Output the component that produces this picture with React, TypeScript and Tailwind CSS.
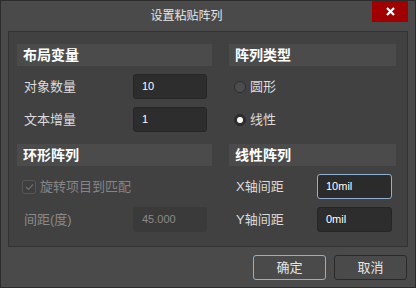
import React, { useState } from "react";

const font = { fontFamily: '"Liberation Sans", "Noto Sans CJK SC", sans-serif' };

const Header: React.FC<{ title: string }> = ({ title }) => (
  <div className="h-[22px] bg-[#4b4b4b] flex items-center pl-[6px] text-[14px] font-bold text-white">{title}</div>
);

const Field: React.FC<{ value: string; focused?: boolean; disabled?: boolean }> = ({ value, focused, disabled }) => (
  <div
    className={
      disabled
        ? "w-[74px] h-[25px] rounded-[3px] bg-[#3a3a3a] border border-[#3a3a3a] flex items-center pl-[8px] text-[11px] text-[#8a8a8a]"
        : focused
        ? "w-[75px] h-[25px] rounded-[3px] bg-[#2b2b2b] border border-[#8fb0d0] flex items-center pl-[8px] text-[11px] text-white"
        : "w-[74px] h-[25px] rounded-[3px] bg-[#2d2d2d] border border-[#262626] flex items-center pl-[8px] text-[11px] text-white"
    }
  >
    {value}
  </div>
);

const Row: React.FC<{ label: string; children: React.ReactNode; muted?: boolean }> = ({ label, children, muted }) => (
  <div className="h-[25px] mt-[8px] flex items-center justify-between pl-[7px] pr-[5px]">
    <span className={muted ? "text-[13px] text-[#8a8a8a]" : "text-[13px] text-[#dcdcdc]"}>{label}</span>
    {children}
  </div>
);

const Radio: React.FC<{ label: string; checked: boolean; onClick: () => void }> = ({ label, checked, onClick }) => (
  <div className="h-[25px] mt-[8px] flex items-center pl-[5px] cursor-pointer" onClick={onClick}>
    <span
      className={
        checked
          ? "w-[12px] h-[12px] rounded-full bg-[#2f2f2f] border border-[#2a2a2a] flex items-center justify-center"
          : "w-[12px] h-[12px] rounded-full bg-[#4d4d4d] border border-[#2e2e2e]"
      }
    >
      {checked && <span className="w-[6px] h-[6px] rounded-full bg-white" />}
    </span>
    <span className="ml-[4px] text-[13px] text-[#dcdcdc]">{label}</span>
  </div>
);

export default function App() {
  const [linear, setLinear] = useState(true);

  return (
    <div style={font} className="w-[416px] h-[288px] bg-[#4a4a4a] border border-[#2c2c2c] flex flex-col">
      {/* title bar */}
      <div className="h-[30px] flex">
        <div className="w-[371px] flex items-center justify-center text-[12px] text-[#e6e6e6]">设置粘贴阵列</div>
        <div className="w-[36px] h-[21px] bg-[#a00000] flex items-center justify-center">
          <svg width="9" height="9" viewBox="0 0 9 9">
            <path d="M1 1 L8 8 M8 1 L1 8" stroke="white" strokeWidth="2.2" />
          </svg>
        </div>
      </div>

      {/* panel */}
      <div className="mx-[7px] h-[216px] bg-[#414141] border border-[#333333] pt-[12px] pl-[8px] pr-[11px]">
        <div className="grid grid-cols-[195px_167px] gap-x-[17px] gap-y-[12px]">
          <div>
            <Header title="布局变量" />
            <Row label="对象数量">
              <Field value="10" />
            </Row>
            <Row label="文本增量">
              <Field value="1" />
            </Row>
          </div>
          <div>
            <Header title="阵列类型" />
            <Radio label="圆形" checked={!linear} onClick={() => setLinear(false)} />
            <Radio label="线性" checked={linear} onClick={() => setLinear(true)} />
          </div>
          <div>
            <Header title="环形阵列" />
            <div className="h-[25px] mt-[8px] flex items-center pl-[5px]">
              <span className="w-[14px] h-[14px] rounded-[3px] border border-[#565656] bg-[#3e3e3e] flex items-center justify-center">
                <svg width="9" height="8" viewBox="0 0 9 8">
                  <path d="M1 4 L3.5 6.5 L8 1.5" stroke="#6e6e6e" strokeWidth="1.2" fill="none" />
                </svg>
              </span>
              <span className="ml-[4px] text-[13px] text-[#858585]">旋转项目到匹配</span>
            </div>
            <Row label="间距(度)" muted>
              <Field value="45.000" disabled />
            </Row>
          </div>
          <div>
            <Header title="线性阵列" />
            <div className="h-[25px] mt-[8px] flex items-center justify-between pl-[7px] pr-[4px]">
              <span className="text-[13px] text-[#dcdcdc]">X轴间距</span>
              <Field value="10mil" focused />
            </div>
            <div className="h-[25px] mt-[8px] flex items-center justify-between pl-[7px] pr-[4px]">
              <span className="text-[13px] text-[#dcdcdc]">Y轴间距</span>
              <div className="w-[75px] h-[25px] rounded-[3px] bg-[#2d2d2d] border border-[#262626] flex items-center pl-[8px] text-[11px] text-white">0mil</div>
            </div>
          </div>
        </div>
      </div>

      {/* buttons */}
      <div className="flex justify-end gap-[8px] pr-[8px] mt-[8px]">
        <button className="w-[73px] h-[25px] rounded-[3px] border border-[#8fb0d0] bg-[#4a4a4a] text-[13px] text-[#e6e6e6]">确定</button>
        <button className="w-[73px] h-[25px] rounded-[3px] border border-[#2a2a2a] bg-[#4a4a4a] text-[13px] text-[#e6e6e6]">取消</button>
      </div>
    </div>
  );
}
